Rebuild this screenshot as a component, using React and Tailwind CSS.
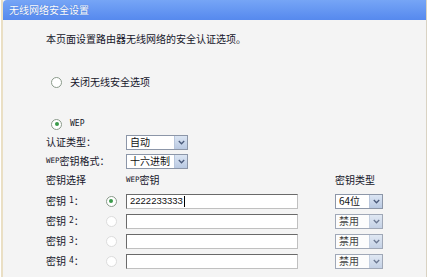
import React from "react";

const cjk = { fontFamily: '"Noto Sans CJK SC", "Liberation Sans", sans-serif' };
const mono = { fontFamily: '"DejaVu Sans Mono", "Liberation Mono", monospace' };

function Radio({ checked, faint }) {
  return (
    <span
      className={
        "flex h-[11px] w-[11px] items-center justify-center rounded-full border bg-white " +
        (faint ? "border-[#dcdcdc]" : "border-[#8a9a8a]")
      }
    >
      {checked && <span className="h-[4px] w-[4px] rounded-full bg-[#3a9a4a]" />}
    </span>
  );
}

function Arrow() {
  return (
    <span className="flex h-full w-[13px] items-center justify-center border-l border-[#b8c6dc] bg-gradient-to-b from-[#dbe5f3] to-[#b9c9e2]">
      <svg width="7" height="5" viewBox="0 0 7 5">
        <path d="M0.8 1 L3.5 3.8 L6.2 1" fill="none" stroke="#4a5a7a" strokeWidth="1.3" />
      </svg>
    </span>
  );
}

function Select({ text, w, faint }) {
  return (
    <div
      className={"flex h-[15px] items-stretch border border-[#8c96a8] bg-white " + (faint ? "opacity-80" : "")}
      style={{ width: w }}
    >
      <span className="flex flex-1 items-center pl-[3px] text-[10px] leading-none text-[#111]" style={cjk}>
        {text}
      </span>
      <Arrow />
    </div>
  );
}

function Input({ value }) {
  return (
    <div className="flex h-[15px] w-[172px] items-center border border-[#6a6a6a] border-r-[#c0c0c0] border-b-[#c0c0c0] bg-white pl-[3px]">
      {value && (
        <span className="text-[9.5px] leading-none text-[#111]" style={{ fontFamily: '"Liberation Sans", sans-serif' }}>
          {value}
        </span>
      )}
      {value && <span className="ml-[1px] h-[11px] w-[1px] bg-black" />}
    </div>
  );
}

function KeyRow({ n, value, checked, type }) {
  return (
    <div className="flex h-[20px] items-center">
      <div className="flex w-[50px] items-center text-[10px] leading-none">
        <span style={cjk}>密钥</span>
        <span className="ml-[3px] text-[8px]" style={mono}>{n}</span>
        <span style={cjk}>：</span>
      </div>
      <div className="flex w-[30px] justify-center">
        <Radio checked={checked} faint={!checked} />
      </div>
      <Input value={value} />
      <div className="ml-[37px]">
        <Select text={type} w={48} faint={!checked} />
      </div>
    </div>
  );
}

export default function App() {
  return (
    <div className="relative h-[277px] w-[429px] overflow-hidden bg-white text-[#16162a]" style={cjk}>
      <div className="ml-[1px] flex h-full w-[426px] flex-col border-l-2 border-r border-l-[#eadfc4] border-r-[#d9d2c2] bg-[#f4f4f4]">
        <div className="flex h-[20px] shrink-0 items-center rounded-tl-[4px] bg-gradient-to-b from-[#76a5f6] to-[#5689ee] pl-[6px] text-[10px] leading-none text-white [text-shadow:0_0_1px_#3a6ac0]">
          无线网络安全设置
        </div>
        <div className="pl-[43px]">
          <div className="mt-[10px] flex h-[18px] items-center text-[10px] leading-none">
            本页面设置路由器无线网络的安全认证选项。
          </div>
          <div className="mt-[25px] flex h-[18px] items-center text-[10px] leading-none">
            <span className="ml-[5px]"><Radio /></span>
            <span className="ml-[8px]">关闭无线安全选项</span>
          </div>
          <div className="mt-[24px] flex h-[18px] items-center text-[10px] leading-none">
            <span className="ml-[5px]"><Radio checked /></span>
            <span className="ml-[8px] text-[8px]" style={mono}>WEP</span>
          </div>
          <div className="flex h-[18px] items-center text-[10px] leading-none">
            <span className="w-[80px]">认证类型：</span>
            <Select text="自动" w={62} />
          </div>
          <div className="mt-[1px] flex h-[18px] items-center text-[10px] leading-none">
            <span className="flex w-[80px] items-center">
              <span className="text-[7.5px]" style={mono}>WEP</span>
              <span>密钥格式：</span>
            </span>
            <Select text="十六进制" w={62} />
          </div>
          <div className="flex h-[19px] items-center text-[10px] leading-none">
            <span className="w-[80px]">密钥选择</span>
            <span className="flex w-[209px] items-center">
              <span className="text-[7.5px]" style={mono}>WEP</span>
              <span>密钥</span>
            </span>
            <span>密钥类型</span>
          </div>
          <div className="mt-[2px]">
            <KeyRow n="1" value="2222233333" checked type="64位" />
            <KeyRow n="2" type="禁用" />
            <KeyRow n="3" type="禁用" />
            <KeyRow n="4" type="禁用" />
          </div>
        </div>
      </div>
    </div>
  );
}
